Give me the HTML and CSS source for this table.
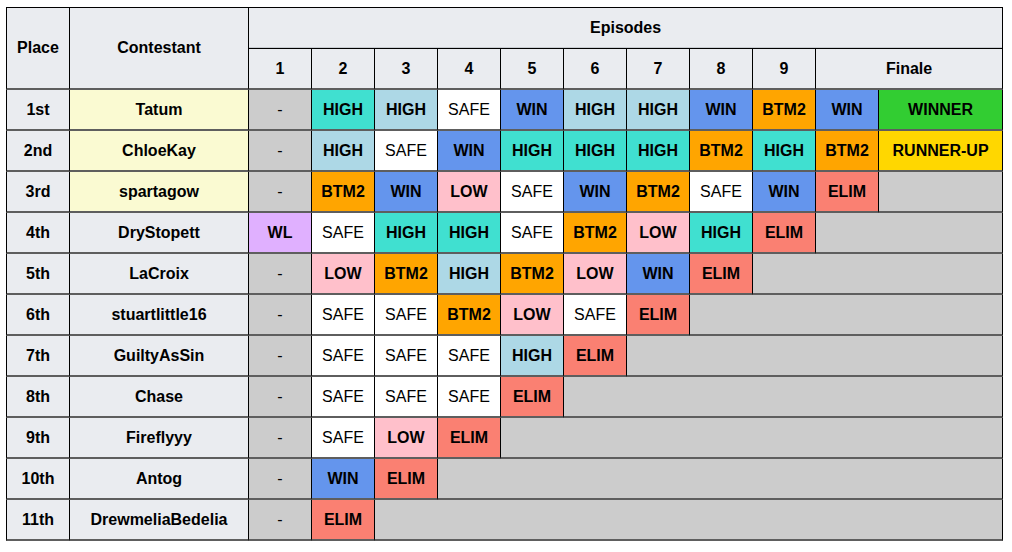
FILE: index.html
```html
<!DOCTYPE html>
<html>
<head>
<meta charset="utf-8">
<link rel="stylesheet" href="styles.css">
</head>
<body>
<table class="prog">
  <colgroup>
    <col class="c-place"><col class="c-name">
    <col class="c-ep"><col class="c-ep"><col class="c-ep"><col class="c-ep"><col class="c-ep">
    <col class="c-ep"><col class="c-ep"><col class="c-ep"><col class="c-ep"><col class="c-ep">
    <col class="c-fin">
  </colgroup>
  <thead>
    <tr class="r-top">
      <th rowspan="2" class="hd">Place</th>
      <th rowspan="2" class="hd">Contestant</th>
      <th colspan="11" class="hd">Episodes</th>
    </tr>
    <tr class="r-eps">
      <th class="hd">1</th><th class="hd">2</th><th class="hd">3</th><th class="hd">4</th><th class="hd">5</th>
      <th class="hd">6</th><th class="hd">7</th><th class="hd">8</th><th class="hd">9</th>
      <th colspan="2" class="hd">Finale</th>
    </tr>
  </thead>
  <tbody>
    <tr>
      <th class="hd">1st</th><th class="yl">Tatum</th>
      <td class="na dash">-</td><td class="tq">HIGH</td><td class="lb">HIGH</td><td class="safe">SAFE</td><td class="win">WIN</td>
      <td class="lb">HIGH</td><td class="lb">HIGH</td><td class="win">WIN</td><td class="btm">BTM2</td><td class="win">WIN</td><td class="winner">WINNER</td>
    </tr>
    <tr>
      <th class="hd">2nd</th><th class="yl">ChloeKay</th>
      <td class="na dash">-</td><td class="lb">HIGH</td><td class="safe">SAFE</td><td class="win">WIN</td><td class="tq">HIGH</td>
      <td class="tq">HIGH</td><td class="tq">HIGH</td><td class="btm">BTM2</td><td class="tq">HIGH</td><td class="btm">BTM2</td><td class="ru">RUNNER-UP</td>
    </tr>
    <tr>
      <th class="hd">3rd</th><th class="yl">spartagow</th>
      <td class="na dash">-</td><td class="btm">BTM2</td><td class="win">WIN</td><td class="low">LOW</td><td class="safe">SAFE</td>
      <td class="win">WIN</td><td class="btm">BTM2</td><td class="safe">SAFE</td><td class="win">WIN</td><td class="elim">ELIM</td><td class="na"></td>
    </tr>
    <tr>
      <th class="hd">4th</th><th class="hd">DryStopett</th>
      <td class="wl">WL</td><td class="safe">SAFE</td><td class="tq">HIGH</td><td class="tq">HIGH</td><td class="safe">SAFE</td>
      <td class="btm">BTM2</td><td class="low">LOW</td><td class="tq">HIGH</td><td class="elim">ELIM</td><td class="na" colspan="2"></td>
    </tr>
    <tr>
      <th class="hd">5th</th><th class="hd">LaCroix</th>
      <td class="na dash">-</td><td class="low">LOW</td><td class="btm">BTM2</td><td class="lb">HIGH</td><td class="btm">BTM2</td>
      <td class="low">LOW</td><td class="win">WIN</td><td class="elim">ELIM</td><td class="na" colspan="3"></td>
    </tr>
    <tr>
      <th class="hd">6th</th><th class="hd">stuartlittle16</th>
      <td class="na dash">-</td><td class="safe">SAFE</td><td class="safe">SAFE</td><td class="btm">BTM2</td><td class="low">LOW</td>
      <td class="safe">SAFE</td><td class="elim">ELIM</td><td class="na" colspan="4"></td>
    </tr>
    <tr>
      <th class="hd">7th</th><th class="hd">GuiltyAsSin</th>
      <td class="na dash">-</td><td class="safe">SAFE</td><td class="safe">SAFE</td><td class="safe">SAFE</td><td class="lb">HIGH</td>
      <td class="elim">ELIM</td><td class="na" colspan="5"></td>
    </tr>
    <tr>
      <th class="hd">8th</th><th class="hd">Chase</th>
      <td class="na dash">-</td><td class="safe">SAFE</td><td class="safe">SAFE</td><td class="safe">SAFE</td><td class="elim">ELIM</td>
      <td class="na" colspan="6"></td>
    </tr>
    <tr>
      <th class="hd">9th</th><th class="hd">Fireflyyy</th>
      <td class="na dash">-</td><td class="safe">SAFE</td><td class="low">LOW</td><td class="elim">ELIM</td>
      <td class="na" colspan="7"></td>
    </tr>
    <tr>
      <th class="hd">10th</th><th class="hd">Antog</th>
      <td class="na dash">-</td><td class="win">WIN</td><td class="elim">ELIM</td>
      <td class="na" colspan="8"></td>
    </tr>
    <tr>
      <th class="hd">11th</th><th class="hd">DrewmeliaBedelia</th>
      <td class="na dash">-</td><td class="elim">ELIM</td>
      <td class="na" colspan="9"></td>
    </tr>
  </tbody>
</table>
</body>
</html>
```

FILE: styles.css
```css
html, body {
  margin: 0;
  padding: 0;
  background: #ffffff;
}

body {
  font-family: "Liberation Sans", Arial, sans-serif;
  font-size: 16px;
  color: #000000;
}

.prog {
  margin: 7px 0 0 6px;
  border-collapse: separate;
  border-spacing: 0;
  table-layout: fixed;
  width: 997px;
}

.c-place { width: 64px; }
.c-name { width: 179px; }
.c-ep { width: 63px; }
.c-fin { width: 124px; }

.prog th,
.prog td {
  box-sizing: border-box;
  padding: 0;
  text-align: center;
  vertical-align: middle;
  font-weight: bold;
  border-right: 1px solid #000;
  border-bottom: 2px solid #5e5e5e;
  height: 41px;
  white-space: nowrap;
}

.prog tr > :first-child {
  border-left: 1px solid #000;
}

.prog .r-eps > :first-child {
  border-left: none;
}

.prog .r-top > * {
  border-top: 1px solid #000;
  height: 42px;
}

.prog .r-top > th[colspan] {
  border-bottom: 1px solid #000;
  box-shadow: inset 0 -1px 0 #c8ccd1;
}

.prog .r-top > th[rowspan] {
  height: 83px;
}

.hd { background: #eaecf0; }
.yl { background: #fafad2; }

.na { background: #cccccc; }
.dash { font-weight: normal !important; }
.safe { background: #ffffff; font-weight: normal !important; }
.tq { background: #40e0d0; }
.lb { background: #add8e6; }
.win { background: #6495ed; }
.btm { background: #ffa500; }
.low { background: #ffc0cb; }
.elim { background: #fa8072; }
.winner { background: #32cd32; }
.ru { background: #ffd700; }
.wl { background: #e0b0ff; }
```
